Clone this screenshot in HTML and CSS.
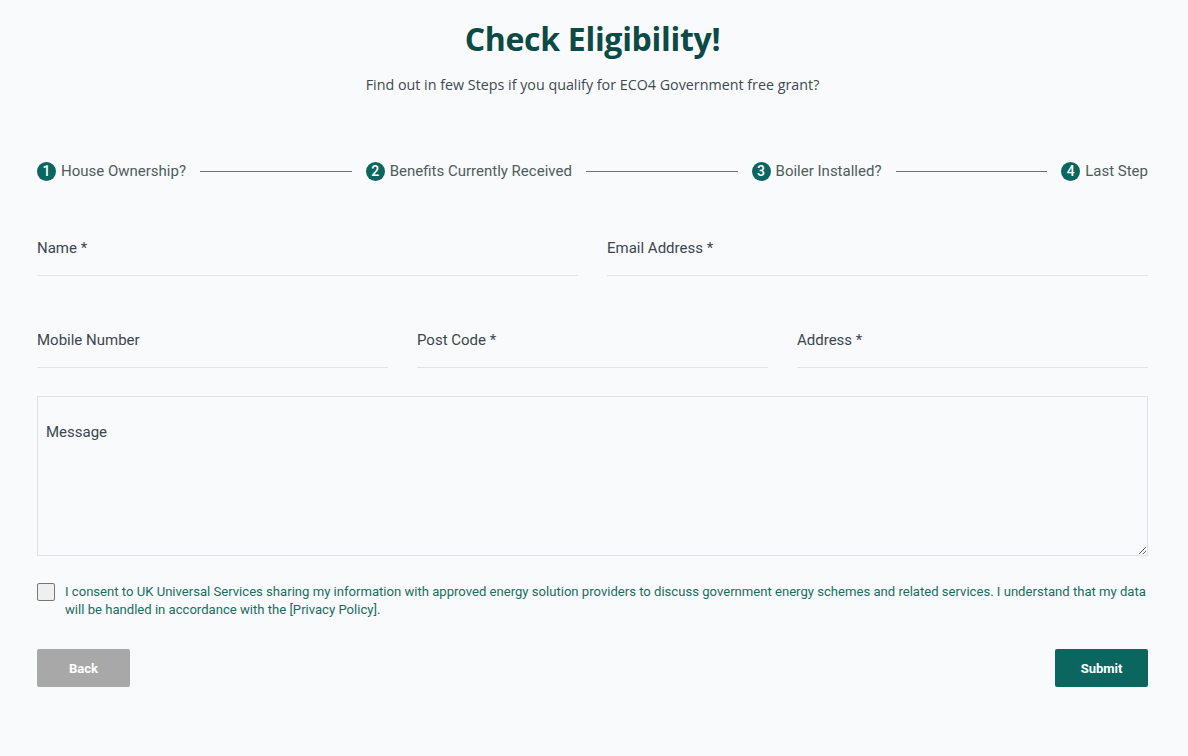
FILE: index.html
```html
<!DOCTYPE html>
<html lang="en">
<head>
<meta charset="utf-8">
<title>Check Eligibility</title>
<link rel="stylesheet" href="styles.css">
</head>
<body>
<main class="page">
  <h1 class="title">Check Eligibility!</h1>
  <p class="subtitle">Find out in few Steps if you qualify for ECO4 Government free grant?</p>

  <ol class="steps">
    <li class="step"><span class="num">1</span><span class="step-label">House Ownership?</span></li>
    <li class="sep"></li>
    <li class="step"><span class="num">2</span><span class="step-label">Benefits Currently Received</span></li>
    <li class="sep"></li>
    <li class="step"><span class="num">3</span><span class="step-label">Boiler Installed?</span></li>
    <li class="sep"></li>
    <li class="step"><span class="num">4</span><span class="step-label">Last Step</span></li>
  </ol>

  <form class="form">
    <div class="row row-2">
      <input class="field" type="text" placeholder="Name *">
      <input class="field" type="email" placeholder="Email Address *">
    </div>
    <div class="row row-3">
      <input class="field" type="tel" placeholder="Mobile Number">
      <input class="field" type="text" placeholder="Post Code *">
      <input class="field" type="text" placeholder="Address *">
    </div>
    <textarea class="message" placeholder="Message"></textarea>

    <label class="consent">
      <span class="box"></span>
      <span class="consent-text">I consent to UK Universal Services sharing my information with approved energy solution providers to discuss government energy schemes and related services. I understand that my data will be handled in accordance with the [Privacy Policy].</span>
    </label>

    <div class="actions">
      <button type="button" class="btn btn-back">Back</button>
      <button type="button" class="btn btn-submit">Submit</button>
    </div>
  </form>
</main>
</body>
</html>
```

FILE: styles.css
```css
* { box-sizing: border-box; }

html, body {
  margin: 0;
  padding: 0;
  background: #f8fafb;
}

body {
  font-family: Roboto, "Liberation Sans", sans-serif;
  color: #3c4650;
}

.page {
  width: 1111px;
  margin-left: 37px;
  padding-top: 19px;
}

.title {
  margin: 0;
  text-align: center;
  font-family: "Open Sans", "Noto Sans", sans-serif;
  font-weight: 700;
  font-size: 32px;
  line-height: 40px;
  color: #0b4a45;
  letter-spacing: -0.3px;
}

.subtitle {
  margin: 16px 0 0;
  text-align: center;
  font-family: "Open Sans", "Noto Sans", sans-serif;
  font-size: 14.3px;
  line-height: 20px;
  color: #3e4a52;
}

.steps {
  list-style: none;
  margin: 66px 0 0;
  padding: 0;
  display: flex;
  align-items: center;
}

.step {
  display: flex;
  align-items: center;
  gap: 5px;
  font-size: 15px;
  line-height: 20px;
  color: #505c5c;
  white-space: nowrap;
}

.num {
  width: 19px;
  height: 19px;
  border-radius: 50%;
  background: #0b6660;
  color: #fff;
  font-size: 14px;
  font-weight: 500;
  line-height: 19px;
  text-align: center;
}

.sep {
  flex: 1;
  height: 1px;
  background: #6b7373;
  margin: 0 14px;
}

.form {
  margin-top: 47px;
}

.row {
  display: grid;
  column-gap: 29px;
  margin-bottom: 44px;
}

.row-2 { grid-template-columns: 1fr 1fr; }
.row-3 { grid-template-columns: 1fr 1fr 1fr; margin-bottom: 28px; }

.field {
  display: block;
  width: 100%;
  border: 0;
  border-bottom: 1px solid #dfe5ea;
  background: transparent;
  padding: 10px 0 17px;
  font-family: Roboto, "Liberation Sans", sans-serif;
  font-size: 15px;
  line-height: 20px;
  height: 48px;
  color: #3c4650;
  outline: none;
}

.field::placeholder,
.message::placeholder {
  color: #3c4650;
  opacity: 1;
}

.message {
  display: block;
  width: 100%;
  height: 160px;
  border: 1px solid #dde4e6;
  background: transparent;
  padding: 25px 8px;
  font-family: Roboto, "Liberation Sans", sans-serif;
  font-size: 15px;
  line-height: 20px;
  color: #3c4650;
  outline: none;
  border-radius: 0;
}

.consent {
  display: flex;
  align-items: flex-start;
  gap: 10px;
  margin-top: 27px;
}

.box {
  flex: none;
  width: 18px;
  height: 18px;
  margin-top: 0;
  border: 1px solid #767676;
  border-radius: 2px;
  background: #efefef;
}

.consent-text {
  font-size: 13.1px;
  line-height: 18px;
  color: #1d6b62;
}

.actions {
  display: flex;
  justify-content: space-between;
  margin-top: 30px;
}

.btn {
  width: 93px;
  height: 38px;
  border: 0;
  border-radius: 2px;
  font-family: Roboto, "Liberation Sans", sans-serif;
  font-weight: 700;
  font-size: 13px;
  color: #fff;
  cursor: pointer;
}

.btn-back { background: #a8a8a8; }
.btn-submit { background: #0b6660; }
```
